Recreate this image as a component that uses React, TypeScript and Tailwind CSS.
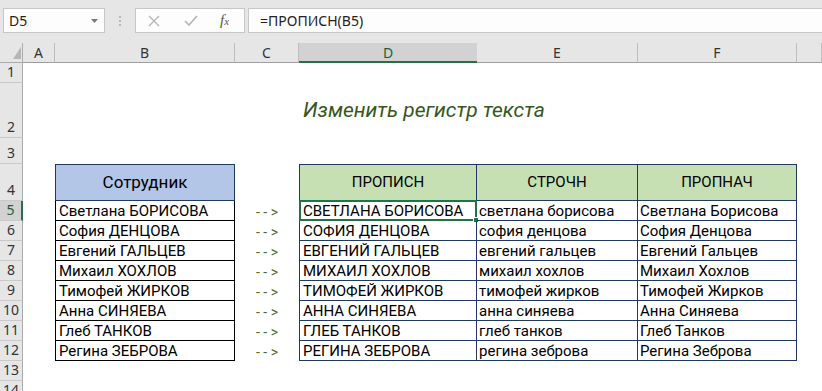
import type { ReactNode } from 'react'

const ROWS = [
  { n: 1, h: 'h-[20px]' },
  { n: 2, h: 'h-[55px]' },
  { n: 3, h: 'h-[26px]' },
  { n: 4, h: 'h-[37px]' },
  { n: 5, h: 'h-[20px]' },
  { n: 6, h: 'h-[20px]' },
  { n: 7, h: 'h-[20px]' },
  { n: 8, h: 'h-[20px]' },
  { n: 9, h: 'h-[20px]' },
  { n: 10, h: 'h-[20px]' },
  { n: 11, h: 'h-[20px]' },
  { n: 12, h: 'h-[20px]' },
  { n: 13, h: 'h-[20px]' },
  { n: 14, h: 'h-[20px]' },
]

// name as typed, then ПРОПИСН / СТРОЧН / ПРОПНАЧ results
const PEOPLE: { name: string; up: string; low: string; prop: string }[] = [
  { name: 'Светлана БОРИСОВА', up: 'СВЕТЛАНА БОРИСОВА', low: 'светлана борисова', prop: 'Светлана Борисова' },
  { name: 'София ДЕНЦОВА', up: 'СОФИЯ ДЕНЦОВА', low: 'софия денцова', prop: 'София Денцова' },
  { name: 'Евгений ГАЛЬЦЕВ', up: 'ЕВГЕНИЙ ГАЛЬЦЕВ', low: 'евгений гальцев', prop: 'Евгений Гальцев' },
  { name: 'Михаил ХОХЛОВ', up: 'МИХАИЛ ХОХЛОВ', low: 'михаил хохлов', prop: 'Михаил Хохлов' },
  { name: 'Тимофей ЖИРКОВ', up: 'ТИМОФЕЙ ЖИРКОВ', low: 'тимофей жирков', prop: 'Тимофей Жирков' },
  { name: 'Анна СИНЯЕВА', up: 'АННА СИНЯЕВА', low: 'анна синяева', prop: 'Анна Синяева' },
  { name: 'Глеб ТАНКОВ', up: 'ГЛЕБ ТАНКОВ', low: 'глеб танков', prop: 'Глеб Танков' },
  { name: 'Регина ЗЕБРОВА', up: 'РЕГИНА ЗЕБРОВА', low: 'регина зеброва', prop: 'Регина Зеброва' },
]

const COLS = [
  { key: 'A', w: 'w-[32px]' },
  { key: 'B', w: 'w-[180px]' },
  { key: 'C', w: 'w-[64px]' },
  { key: 'D', w: 'w-[178px]' },
  { key: 'E', w: 'w-[161px]' },
  { key: 'F', w: 'w-[159px]' },
  { key: '', w: 'flex-1' },
]

const ui = { fontFamily: '"Noto Sans", "Open Sans", sans-serif' }
const cellFont = { fontFamily: 'Roboto, "Liberation Sans", sans-serif' }

function FormulaBar() {
  return (
    <div className="h-[43px] bg-[#e6e6e6] flex items-start pt-[8px] pl-[3px]" style={ui}>
      <div className="w-[102px] h-[25px] bg-[#fdfdfd] border border-[#c6c6c6] flex items-center pl-[5px] pr-[6px] text-[14px] text-[#222]">
        <span className="flex-1">D5</span>
        <svg width="7" height="4" viewBox="0 0 7 4"><path d="M0 0h7L3.5 4z" fill="#7a7a7a" /></svg>
      </div>
      <div className="w-[30px] h-[25px] flex flex-col items-center justify-center gap-[2px]">
        <span className="w-[2px] h-[2px] bg-[#b9b9b9]" />
        <span className="w-[2px] h-[2px] bg-[#b9b9b9]" />
        <span className="w-[2px] h-[2px] bg-[#b9b9b9]" />
      </div>
      <div className="w-[110px] h-[25px] bg-[#fdfdfd] border border-[#c6c6c6] flex items-center pl-[12px]">
        <svg width="12" height="12" viewBox="0 0 12 12"><path d="M1 1l10 10M11 1L1 11" stroke="#b4b4b4" strokeWidth="1.3" /></svg>
        <svg className="ml-[24px]" width="14" height="11" viewBox="0 0 14 11"><path d="M1 6l4 4 8-9" stroke="#b4b4b4" strokeWidth="1.6" fill="none" /></svg>
        <span className="ml-[22px] italic text-[#555] text-[15px] leading-none" style={{ fontFamily: '"Liberation Serif", serif' }}>
          f<span className="text-[11px]">x</span>
        </span>
      </div>
      <div className="ml-[3px] flex-1 h-[25px] bg-[#fdfdfd] border border-r-0 border-[#c6c6c6] flex items-center pl-[11px] text-[14px] text-[#222]">
        =ПРОПИСН(B5)
      </div>
    </div>
  )
}

function ColumnHeaders() {
  return (
    <div className="flex h-[20px] bg-[#e6e6e6]" style={ui}>
      <div className="w-[23px] relative border-r border-b border-[#ababab]">
        <svg className="absolute right-[1px] bottom-[3px]" width="8" height="12" viewBox="0 0 8 12"><path d="M8 0v12H0z" fill="#b5b5b5" /></svg>
      </div>
      {COLS.map(c =>
        c.key === 'D' ? (
          <div key="D" className={`${c.w} bg-[#d2d2d2] border-b-2 border-[#217346] flex items-center justify-center text-[14px] text-[#1f5e3a]`}>
            D
          </div>
        ) : (
          <div key={c.key || 'g'} className={`${c.w} border-r border-r-[#bdbdbd] border-b border-b-[#9f9f9f] flex items-center justify-center text-[14px] text-[#333]`}>
            {c.key}
          </div>
        )
      )}
    </div>
  )
}

function RowHeader({ n, h }: { n: number; h: string }) {
  const sel = n === 5
  return (
    <div
      className={`w-[23px] ${h} shrink-0 flex items-end justify-center pb-[1px] text-[14px] leading-[18px] border-b border-b-[#c9c9c9] ${
        sel ? 'bg-[#d2d2d2] border-r-2 border-r-[#217346] text-[#1f5e3a]' : 'bg-[#e6e6e6] border-r border-r-[#ababab] text-[#333]'
      }`}
      style={ui}
    >
      {n}
    </div>
  )
}

function Cell({ w, children, className = '' }: { w: string; children?: ReactNode; className?: string }) {
  return <div className={`${w} shrink-0 relative flex items-center whitespace-nowrap ${className}`}>{children}</div>
}

function SheetRow({ n, h }: { n: number; h: string }) {
  const p = n >= 5 && n <= 12 ? PEOPLE[n - 5] : null
  let b: ReactNode = null
  let c: ReactNode = null
  let d: ReactNode = null
  let e: ReactNode = null
  let f: ReactNode = null
  let bCls = ''
  let cCls = ''
  let dCls = ''
  let eCls = ''
  let fCls = ''

  if (n === 2) {
    d = <span className="pl-[4px] italic text-[21px] text-[#375623]">Изменить регистр текста</span>
  }
  if (n === 4) {
    bCls = 'justify-center text-[17px] bg-[#b4c6e7] border border-[#1f3864]'
    b = 'Сотрудник'
    dCls = 'justify-center bg-[#c6e0b4] border border-[#1f3864]'
    d = 'ПРОПИСН'
    eCls = 'justify-center bg-[#c6e0b4] border-t border-b border-r border-[#1f3864]'
    e = 'СТРОЧН'
    fCls = 'justify-center bg-[#c6e0b4] border-t border-b border-r border-[#1f3864]'
    f = 'ПРОПНАЧ'
  }
  if (p) {
    bCls = 'pl-[3px] pt-[2px] border-l border-r border-b border-black'
    b = p.name
    cCls = 'pt-[2px]'
    c = <span className="w-full text-center text-[14px] text-[#4d6a2e]">- - &gt;</span>
    dCls = 'pl-[3px] pt-[2px] border-l border-r border-b border-[#1f3864]'
    d = (
      <>
        {p.up}
        {n === 5 && (
          <div className="absolute -left-[1px] -top-[1px] -right-[1px] -bottom-[1px] border-2 border-[#217346]">
            <div className="absolute -right-[4px] -bottom-[4px] w-[6px] h-[6px] bg-[#217346] border border-white" />
          </div>
        )}
      </>
    )
    eCls = 'pl-[2px] pt-[2px] border-r border-b border-[#1f3864]'
    e = p.low
    fCls = 'pl-[2px] pt-[2px] border-r border-b border-[#1f3864]'
    f = p.prop
  }

  return (
    <div className={`flex ${h}`}>
      <RowHeader n={n} h={h} />
      <div className="flex-1 flex text-[15px] text-black" style={cellFont}>
        <Cell w="w-[32px]" />
        <Cell w="w-[180px]" className={bCls}>{b}</Cell>
        <Cell w="w-[64px]" className={cCls}>{c}</Cell>
        <Cell w="w-[178px]" className={dCls}>{d}</Cell>
        <Cell w="w-[161px]" className={eCls}>{e}</Cell>
        <Cell w="w-[159px]" className={fCls}>{f}</Cell>
        <Cell w="flex-1" />
      </div>
    </div>
  )
}

export default function App() {
  return (
    <div className="w-[822px] h-[391px] overflow-hidden bg-white">
      <FormulaBar />
      <ColumnHeaders />
      {ROWS.map(r => (
        <SheetRow key={r.n} n={r.n} h={r.h} />
      ))}
    </div>
  )
}
